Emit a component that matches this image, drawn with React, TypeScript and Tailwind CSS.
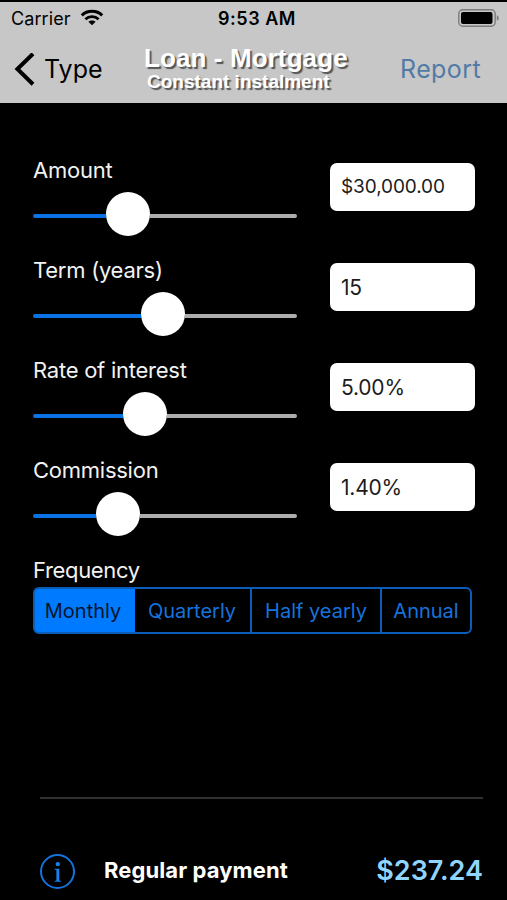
import clsx from "clsx";

type SliderField = {
    label: string;
    value: string;
    position: number;
    small?: boolean;
};

// position is the distance from the start of the track to the knob's left edge
const fields: SliderField[] = [
    { label: "Amount", value: "$30,000.00", position: 73, small: true },
    { label: "Term (years)", value: "15", position: 107.5 },
    { label: "Rate of interest", value: "5.00%", position: 90 },
    { label: "Commission", value: "1.40%", position: 63 },
];

const frequencies = [
    { label: "Monthly", className: "w-[100px] pr-[4px]" },
    { label: "Quarterly", className: "w-[115px] pr-[1px]" },
    { label: "Half yearly", className: "w-[130px]" },
    { label: "Annual", className: "flex-1" },
];

function WifiIcon() {
    return (
        <svg width="24" height="18" viewBox="0 0 24 18" fill="none" stroke="black">
            <path d="M1.8 6.3C7.3 0.9 16.7 0.9 22.2 6.3" strokeWidth="3.1" />
            <path d="M5.4 10.2C9.1 6.7 14.9 6.7 18.6 10.2" strokeWidth="2.9" />
            <path d="M12 16.2L8.4 12.8C10.4 11 13.6 11 15.6 12.8Z" fill="black" stroke="none" />
        </svg>
    );
}

function BatteryIcon() {
    return (
        <svg width="42" height="18" viewBox="0 0 42 18" fill="none">
            <rect x="0.8" y="0.8" width="36.4" height="16.4" rx="4" stroke="#7c7c7c" strokeWidth="1.4" />
            <rect x="3" y="3" width="31.5" height="12" rx="2" fill="black" />
            <path d="M38.8 6.2C41.4 7.4 41.4 10.6 38.8 11.8Z" fill="#7c7c7c" />
        </svg>
    );
}

function Header() {
    return (
        <header className="h-[101px] bg-[#c7c7c7] text-black">
            <div className="grid h-8 grid-cols-3 items-center pl-[11px] pr-[7px]">
                <div className="flex items-center gap-[9px]">
                    <span className="text-[18px] tracking-[0.1px]">Carrier</span>
                    <WifiIcon />
                </div>
                <span className="whitespace-nowrap pl-[3px] text-center text-[18px] font-semibold tracking-[0.5px]">9:53 AM</span>
                <div className="flex justify-end">
                    <BatteryIcon />
                </div>
            </div>
            <nav className="flex h-[69px] items-start pl-[14px] pr-[26px]">
                <button className="flex h-[68px] w-[130px] items-center gap-[8px] pt-[3px] text-[25px]">
                    <svg width="22" height="34" viewBox="0 0 22 34" fill="none" stroke="black" strokeWidth="4">
                        <path d="M19 0.8L3.4 16L19 31.2" />
                    </svg>
                    Type
                </button>
                <div className="flex flex-col items-start whitespace-nowrap pt-[11px] font-['Liberation_Sans',sans-serif] font-bold text-white [text-shadow:2px_2px_1px_#555]">
                    <span className="text-[26px] leading-[26px] tracking-[0.1px]">Loan - Mortgage</span>
                    <span className="pl-[3px] pt-px text-[19px] leading-[20px]">Constant instalment</span>
                </div>
                <button className="ml-auto flex h-[68px] items-center pt-[3px] text-[25px] tracking-[0.4px] text-[#517ba6]">Report</button>
            </nav>
        </header>
    );
}

function SliderRow({ label, value, position, small }: SliderField) {
    return (
        <div className="flex h-[100px] items-start justify-between">
            <div className="w-[264px]">
                <div className="h-[39px] text-[22px] leading-[34px] tracking-[-0.25px]">{label}</div>
                <div className="flex h-[44px] items-center">
                    <div className="mt-[4px] h-[4px] rounded-l-full bg-[#0a72e4]" style={{ width: position }} />
                    <div className="size-[44px] shrink-0 rounded-full bg-white" />
                    <div className="mt-[4px] h-[4px] flex-1 rounded-r-full bg-[#adadad]" />
                </div>
            </div>
            <div
                className={clsx(
                    "mt-[10px] flex h-[48px] w-[145px] items-center rounded-[7px] bg-white pl-[11px] text-[#1c1c1c]",
                    small ? "text-[19px] tracking-[-0.1px]" : "pt-[2px] text-[21px] tracking-[-0.2px]"
                )}
            >
                {value}
            </div>
        </div>
    );
}

export default function App() {
    return (
        <div className="flex h-[900px] w-[507px] flex-col overflow-hidden bg-black pt-[2px] font-['Inter',sans-serif] text-[#f2f2f2]">
            <Header />
            <main className="flex flex-1 flex-col pl-[33px] pr-[32px] pt-[50px]">
                {fields.map((field) => (
                    <SliderRow key={field.label} {...field} />
                ))}
                <div className="h-[34px] text-[22px] leading-[34px] tracking-[-0.35px]">Frequency</div>
                <div className="flex h-[47px] w-[439px] overflow-hidden rounded-[6px] border-2 border-[#0b5db8] bg-[#0b5db8]">
                    {frequencies.map(({ label, className }, index) => (
                        <button
                            key={label}
                            className={clsx(
                                "flex items-center justify-center whitespace-nowrap text-[20px]",
                                className,
                                index === 0 ? "bg-[#007aff] text-[#04152b]" : "bg-black text-[#1673dc]",
                                index > 1 && "border-l-2 border-[#0b5db8]"
                            )}
                        >
                            {label}
                        </button>
                    ))}
                </div>
            </main>
            <footer className="ml-[40px] mr-[24px] h-[103px] border-t-2 border-[#303030] pt-[54px]">
                <div className="flex h-[37px] items-center">
                    <div className="flex size-[35px] items-center justify-center rounded-full border-2 border-[#1273dc]">
                        <svg width="8" height="22" viewBox="0 0 8 22" fill="#1680f0">
                            <circle cx="3.8" cy="3.1" r="2.2" />
                            <path d="M0.6 7.8H5.3V19.6L7 20V20.8H0.6V20L2.4 19.6V9L0.6 8.6Z" />
                        </svg>
                    </div>
                    <span className="ml-[29px] pb-[2px] text-[22px] font-bold tracking-[0.1px] text-white">Regular payment</span>
                    <span className="ml-auto text-[27px] font-semibold text-[#90d5ff]">$237.24</span>
                </div>
            </footer>
        </div>
    );
}
